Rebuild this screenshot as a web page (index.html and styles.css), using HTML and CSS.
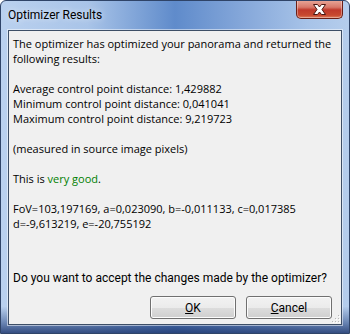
FILE: index.html
```html
<!DOCTYPE html>
<html>
<head>
<meta charset="utf-8">
<link rel="stylesheet" href="styles.css">
</head>
<body>
<div class="window">
  <div class="titlebar">
    <span class="title">Optimizer Results</span>
    <div class="close">
      <svg width="47" height="19" viewBox="0 0 47 19">
        <path d="M17.5 4.5 L21.5 4.5 L23.5 7 L25.5 4.5 L29.5 4.5 L26 9.5 L29.5 14.5 L25.5 14.5 L23.5 12 L21.5 14.5 L17.5 14.5 L21 9.5 Z" fill="#ffffff" stroke="#4a1510" stroke-width="1" stroke-linejoin="round"/>
      </svg>
    </div>
  </div>
  <div class="client">
    <div class="message">The optimizer has optimized your panorama and returned the
following results:

Average control point distance: 1,429882
Minimum control point distance: 0,041041
Maximum control point distance: 9,219723

(measured in source image pixels)

This is <span class="good">very good</span>.

FoV=103,197169, a=0,023090, b=-0,011133, c=0,017385
d=-9,613219, e=-20,755192</div>
    <div class="question">Do you want to accept the changes made by the optimizer?</div>
    <div class="buttons">
      <button class="btn"><u>O</u>K</button>
      <button class="btn"><u>C</u>ancel</button>
    </div>
    <svg class="grip" width="10" height="10" viewBox="0 0 10 10">
      <g fill="#b8b8b8">
        <rect x="7" y="1" width="1" height="1"/>
        <rect x="4" y="4" width="1" height="1"/><rect x="7" y="4" width="1" height="1"/>
        <rect x="1" y="7" width="1" height="1"/><rect x="4" y="7" width="1" height="1"/><rect x="7" y="7" width="1" height="1"/>
      </g>
      <g fill="#ffffff">
        <rect x="8" y="2" width="1" height="1"/>
        <rect x="5" y="5" width="1" height="1"/><rect x="8" y="5" width="1" height="1"/>
        <rect x="2" y="8" width="1" height="1"/><rect x="5" y="8" width="1" height="1"/><rect x="8" y="8" width="1" height="1"/>
      </g>
    </svg>
  </div>
</div>
</body>
</html>
```
FILE: styles.css
```css
html, body {
  margin: 0;
  padding: 0;
  background: #ffffff;
}
.window {
  position: relative;
  width: 350px;
  height: 334px;
  box-sizing: border-box;
  border: 1px solid #2f4468;
  border-radius: 6px 6px 0 0;
  background:
    linear-gradient(180deg, rgba(40,70,130,0) 0%, rgba(40,70,130,0) 92%, rgba(40,70,130,0.55) 97%, rgba(30,55,110,0.85) 100%),
    linear-gradient(90deg, #bad1ef 0%, #a9c4e8 25%, #5f8bcb 50%, #86a8da 70%, #a7c3e8 88%, #b5cdec 100%);
  display: flex;
  flex-direction: column;
  font-family: "Open Sans", "Noto Sans", sans-serif;
  font-size: 11px;
  color: #000;
  overflow: hidden;
}
.titlebar {
  height: 29px;
  position: relative;
  display: flex;
  align-items: center;
}
.title {
  margin-left: 7px;
  margin-top: -1px;
  font-family: "Roboto", "Lato", sans-serif;
  font-size: 12px;
  color: #000;
  text-shadow: 0 0 6px rgba(255,255,255,0.8);
}
.close {
  position: absolute;
  right: 6px;
  top: -1px;
  width: 47px;
  height: 19px;
  box-sizing: border-box;
  border: 1px solid #6b1f16;
  border-top: none;
  border-radius: 0 0 5px 5px;
  background: linear-gradient(180deg, #e9a99b 0%, #d8786a 40%, #c0392b 55%, #c8492f 85%, #df8060 100%);
  box-shadow: inset 0 0 0 1px rgba(255,255,255,0.35);
}
.close svg {
  position: absolute;
  left: -1px;
  top: 0;
}
.client {
  position: relative;
  flex: 1;
  margin: 0 7px 8px 7px;
  background: #f0f0f0;
  border: 1px solid #3d4e66;
  box-shadow: 0 0 0 1px rgba(255,255,255,0.5);
  display: flex;
  flex-direction: column;
}
.message {
  white-space: pre;
  line-height: 15px;
  padding: 5px 0 0 4px;
}
.good {
  color: #008000;
}
.question {
  margin-top: auto;
  padding-left: 4px;
  line-height: 15px;
  font-family: "Roboto", "Lato", sans-serif;
  font-size: 12px;
}
.buttons {
  display: flex;
  justify-content: flex-end;
  gap: 10px;
  padding: 10px 9px 5px 0;
}
.btn {
  width: 86px;
  height: 23px;
  box-sizing: border-box;
  border: 1px solid #707070;
  border-radius: 3px;
  background: linear-gradient(180deg, #f2f2f2 0%, #ebebeb 50%, #dddddd 50%, #cfcfcf 100%);
  box-shadow: inset 0 0 0 1px #fcfcfc;
  font-family: "Roboto", "Lato", sans-serif;
  font-size: 12px;
  color: #000;
  padding: 0;
}
.grip {
  position: absolute;
  right: 0;
  bottom: 0;
}
```
